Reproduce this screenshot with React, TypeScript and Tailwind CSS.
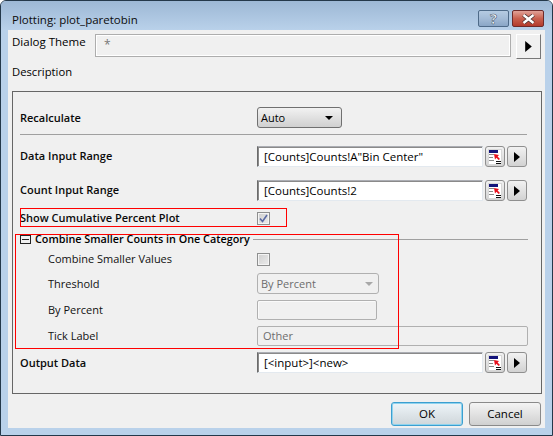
import React from "react";

const RangeIcon = () => (
  <svg width="14" height="16" viewBox="0 0 14 16" shapeRendering="crispEdges">
    <rect x="0.5" y="0.5" width="13" height="14.5" fill="#fff" stroke="#d8d8d8" />
    <rect x="1" y="1" width="9" height="3" fill="#14147a" />
    <rect x="1" y="5" width="5" height="1" fill="#888" />
    <rect x="1" y="8" width="4" height="1" fill="#888" />
    <rect x="1" y="11" width="5" height="1" fill="#888" />
    <rect x="8" y="12" width="5" height="1" fill="#111" />
    <rect x="8" y="14" width="5" height="1" fill="#111" />
    <path d="M6 5 L11 6 L9.6 7.6 L12 10 L10.6 11 L8.4 8.8 L7 10.5 Z" fill="#e8101c" shapeRendering="auto" />
  </svg>
);

const Tri = ({ big }: { big?: boolean }) => (
  <svg width={big ? 7 : 6} height={big ? 11 : 10} viewBox="0 0 6 10">
    <path d="M0 0 L6 5 L0 10 Z" fill="#000" />
  </svg>
);

const SideButtons = () => (
  <>
    <button className="ml-[2px] flex h-[21px] w-[20px] items-center justify-center rounded-[3px] border border-[#8f8f8f] bg-gradient-to-b from-[#f2f2f2] to-[#d2d2d2]">
      <RangeIcon />
    </button>
    <button className="ml-[2px] flex h-[21px] w-[20px] items-center justify-center rounded-[3px] border border-[#8f8f8f] bg-gradient-to-b from-[#f2f2f2] to-[#d2d2d2]">
      <Tri />
    </button>
  </>
);

const Field = ({ value }: { value: string }) => (
  <div className="flex h-[21px] w-[226px] items-center border border-[#e3e9ef] border-t-[#abadb3] border-l-[#6b6b6b] bg-white pl-[6px] text-[11.5px] text-black shadow-[inset_1px_1px_0_#8a8a8a]">
    {value}
  </div>
);

const Check = ({ checked }: { checked?: boolean }) => (
  <div className="flex h-[13px] w-[13px] items-center justify-center border border-[#8e8f8f] bg-gradient-to-br from-[#cfcfcf] to-[#ececec] shadow-[inset_0_0_0_1px_#f4f4f4]">
    {checked && (
      <svg width="9" height="9" viewBox="0 0 9 9">
        <path d="M1 4.5 L3.5 7.5 L8 1" fill="none" stroke="#5a6aa4" strokeWidth="1.6" />
      </svg>
    )}
  </div>
);

const labelBold = "w-[244px] whitespace-nowrap pl-[7px] text-[11px] font-semibold text-[#0a0a0a]";
const labelBoldLow = "w-[244px] whitespace-nowrap pl-[7px] pt-[2px] text-[11px] font-semibold text-[#0a0a0a]";
const labelSub = "w-[244px] whitespace-nowrap pl-[35px] text-[11px] text-[#111]";
const labelSubLow = "w-[244px] whitespace-nowrap pl-[35px] pt-[2px] text-[11px] text-[#111]";

export default function App() {
  return (
    <div
      className="relative flex h-[436px] w-[553px] flex-col overflow-hidden rounded-t-[6px] border border-[#24384a] bg-[#b9d1ea] text-black"
      style={{ fontFamily: '"Open Sans", "Noto Sans", sans-serif' }}
    >
      {/* Title bar */}
      <div className="flex h-[29px] shrink-0 bg-gradient-to-b from-[#9db8d5] to-[#b9d1ea]">
        <span className="ml-[11px] mt-[10px] text-[11.5px] leading-[18px] text-[#0c0c0c]">Plotting: plot_paretobin</span>
        <div className="ml-auto mr-[8px] mt-[9px] flex gap-[3px]">
          <div className="flex h-[17px] w-[31px] items-center justify-center rounded-[2px] border border-[#4e6a88] bg-gradient-to-b from-[#b5cbe2] via-[#a3bbd6] to-[#8aa6c6]">
            <span className="text-[14px] font-bold leading-none text-white [-webkit-text-stroke:0.6px_#4a5a6e]">?</span>
          </div>
          <div className="flex h-[17px] w-[32px] items-center justify-center rounded-[2px] border border-[#6e2a2a] bg-gradient-to-b from-[#e0a198] via-[#c9604f] to-[#b33a2c]">
            <svg width="15" height="10" viewBox="0 0 15 10">
              <path d="M2.5 1 L12.5 9 M12.5 1 L2.5 9" stroke="#4a3030" strokeWidth="4" />
              <path d="M2.5 1 L12.5 9 M12.5 1 L2.5 9" stroke="#fff" strokeWidth="2.4" />
            </svg>
          </div>
        </div>
      </div>

      {/* Client area */}
      <div className="mx-[7px] mb-[7px] flex flex-1 flex-col bg-[#f0f0f0] px-[4px]">
        <div className="mt-[4px] flex h-[25px] items-start">
          <span className="h-[16px] w-[83px] text-[11.5px] leading-[16px]">Dialog Theme</span>
          <div className="flex h-[23px] w-[416px] items-start border border-[#adadad] pl-[8px] pt-[1px] text-[12px] text-[#777] shadow-[inset_1px_1px_0_#fff,inset_-1px_-1px_0_#fff]">
            *
          </div>
          <button className="ml-[5px] flex h-[25px] w-[25px] shrink-0 items-center justify-center border border-[#fff] border-b-[#777] border-r-[#777] bg-[#f0f0f0]">
            <Tri big />
          </button>
        </div>
        <div className="mt-[4px] h-[18px] text-[11.25px] leading-[18px]">Description</div>

        {/* Panel */}
        <div className="mt-[10px] flex h-[303px] w-[530px] flex-col border border-[#666] pt-[15px]">
          <div className="flex h-[21px] items-center">
            <span className={labelBoldLow}>Recalculate</span>
            <div className="flex h-[21px] w-[85px] items-center justify-between rounded-[3px] border border-[#707070] bg-gradient-to-b from-[#f2f2f2] to-[#d0d0d0] pl-[3px] pr-[8px] pt-[1px] text-[11px]">
              Auto
              <span className="h-0 w-0 border-x-[4px] border-t-[4px] border-x-transparent border-t-black" />
            </div>
          </div>
          <div className="ml-[7px] mt-[6px] h-px w-[507px] bg-[#a0a0a0]" />
          <div className="mt-[11px] flex h-[21px] items-center">
            <span className={labelBold}>Data Input Range</span>
            <Field value={'[Counts]Counts!A"Bin Center"'} />
            <SideButtons />
          </div>
          <div className="mt-[13px] flex h-[21px] items-center">
            <span className={labelBold}>Count Input Range</span>
            <Field value="[Counts]Counts!2" />
            <SideButtons />
          </div>
          <div className="mt-[7px] flex h-[20px] items-center">
            <span className={labelBold}>Show Cumulative Percent Plot</span>
            <Check checked />
          </div>
          <div className="mt-[1px] flex h-[20px] items-center pl-[7px]">
            <div className="mr-[4px] flex h-[9px] w-[11px] items-center justify-center border border-[#222]">
              <div className="h-px w-[7px] bg-[#222]" />
            </div>
            <span className="whitespace-nowrap text-[10.8px] font-semibold">Combine Smaller Counts in One Category</span>
            <div className="ml-[3px] mr-[13px] h-px flex-1 bg-[#a0a0a0]" />
          </div>
          <div className="flex h-[20px] items-center">
            <span className={labelSub}>Combine Smaller Values</span>
            <Check />
          </div>
          <div className="mt-[4px] flex h-[21px] items-center">
            <span className={labelSubLow}>Threshold</span>
            <div className="flex h-[21px] w-[122px] items-center justify-between rounded-[3px] border border-[#b0b0b0] pl-[3px] pr-[5px] pt-[1px] text-[11px] text-[#6d6d6d]">
              By Percent
              <span className="h-0 w-0 border-x-[4px] border-t-[4px] border-x-transparent border-t-[#a8a8a8]" />
            </div>
          </div>
          <div className="mt-[5px] flex h-[21px] items-center">
            <span className={labelSubLow}>By Percent</span>
            <div className="h-[20px] w-[120px] rounded-[2px] border border-[#b0b0b0] shadow-[inset_1px_1px_0_#fafafa]" />
          </div>
          <div className="mt-[5px] flex h-[21px] items-center">
            <span className={labelSubLow}>Tick Label</span>
            <div className="flex h-[20px] w-[271px] items-center rounded-[2px] border border-[#b0b0b0] pl-[5px] pt-[1px] text-[11px] text-[#6d6d6d]">
              Other
            </div>
          </div>
          <div className="mt-[6px] flex h-[21px] items-center">
            <span className={labelBoldLow}>Output Data</span>
            <Field value="[<input>]<new>" />
            <SideButtons />
          </div>
        </div>

        {/* Footer */}
        <div className="mt-[8px] flex justify-end gap-[6px]">
          <button className="h-[24px] w-[72px] rounded-[3px] border border-[#3c9fd0] bg-gradient-to-b from-[#eef5f9] to-[#cfd6da] text-[11.5px] shadow-[inset_0_0_0_1px_#8fd3ee]">
            OK
          </button>
          <button className="h-[24px] w-[72px] rounded-[3px] border border-[#8a8a8a] bg-gradient-to-b from-[#f4f4f4] to-[#d0d0d0] text-[11.5px]">
            Cancel
          </button>
        </div>
      </div>

      {/* Red annotations */}
      <div className="absolute left-[19px] top-[207px] h-[19px] w-[267px] border border-[#f00]" />
      <div className="absolute left-[14px] top-[233px] h-[115px] w-[384px] border border-[#f00]" />
    </div>
  );
}
